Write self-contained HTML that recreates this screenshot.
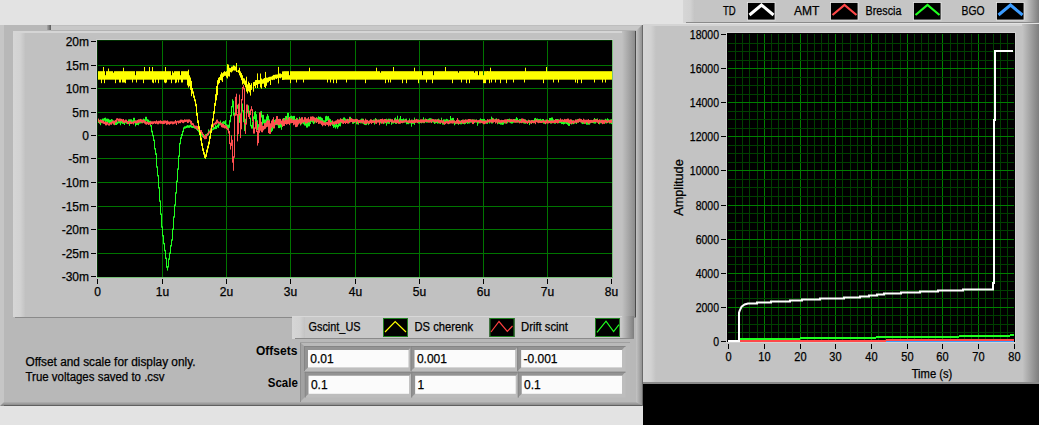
<!DOCTYPE html>
<html><head><meta charset="utf-8"><style>html,body{margin:0;padding:0;background:#e3e3e3;width:1039px;height:425px;overflow:hidden}svg{display:block;font-family:"Liberation Sans",sans-serif}</style></head>
<body><svg width="1039" height="425" viewBox="0 0 1039 425" font-family="Liberation Sans, sans-serif"><defs>
<linearGradient id="gR" x1="0" x2="1" y1="0" y2="0"><stop offset="0" stop-color="#c1c1c1"/><stop offset="1" stop-color="#8c8c8c"/></linearGradient>
<linearGradient id="gL" x1="0" x2="1" y1="0" y2="0"><stop offset="0" stop-color="#d6d6d6"/><stop offset="0.6" stop-color="#d2d2d2"/><stop offset="1" stop-color="#c3c3c3"/></linearGradient>
<linearGradient id="gB" x1="0" x2="0" y1="0" y2="1"><stop offset="0" stop-color="#b0b0b0"/><stop offset="1" stop-color="#808080"/></linearGradient>
<linearGradient id="gRL" x1="0" x2="1" y1="0" y2="0"><stop offset="0" stop-color="#c5c5c5"/><stop offset="1" stop-color="#7e7e7e"/></linearGradient>
<linearGradient id="gN" x1="0" x2="1" y1="0" y2="0"><stop offset="0" stop-color="#a8a8a8"/><stop offset="1" stop-color="#5a5a5a"/></linearGradient>
</defs>
<rect x="0" y="0" width="1039" height="425" fill="#e3e3e3" />
<rect x="0" y="25" width="643" height="381" fill="#b8b8b8" />
<rect x="0" y="25" width="4" height="381" fill="#c6c6c6" />
<rect x="51" y="25" width="591" height="6" fill="#c8c8c8" />
<rect x="51" y="25" width="591" height="1" fill="#bebebe" />
<rect x="51" y="30" width="585" height="1" fill="#b2b2b2" />
<rect x="47" y="25" width="4" height="5" fill="url(#gN)" />
<linearGradient id="gOR" x1="0" x2="1" y1="0" y2="0"><stop offset="0" stop-color="#c4c4c4"/><stop offset="1" stop-color="#8a8a8a"/></linearGradient>
<polygon points="636,31 642,25 643,25 643,406 636,406" fill="url(#gOR)"/>
<rect x="642" y="25" width="1" height="381" fill="#6a6a6a" />
<polygon points="0,406 4,402 636,402 643,406" fill="url(#gB)"/>
<rect x="4" y="405" width="638" height="1" fill="#606060" />
<rect x="13" y="31" width="623" height="286" fill="#c1c1c1" />
<rect x="13" y="31" width="12" height="286" fill="url(#gL)" />
<rect x="13" y="31" width="614" height="2" fill="#d5d5d5" />
<rect x="622" y="31" width="13" height="286" fill="url(#gR)" />
<rect x="635" y="31" width="1" height="286" fill="#4a4a4a" />
<rect x="15" y="317" width="621" height="1" fill="#8a8a8a" />
<rect x="96" y="39" width="517" height="239" fill="#cdcdcd" />
<rect x="97" y="40" width="515" height="237" fill="#000" />
<line x1="162.5" y1="40" x2="162.5" y2="277" stroke="#007400"/>
<line x1="226.5" y1="40" x2="226.5" y2="277" stroke="#007400"/>
<line x1="290.5" y1="40" x2="290.5" y2="277" stroke="#007400"/>
<line x1="355.5" y1="40" x2="355.5" y2="277" stroke="#007400"/>
<line x1="419.5" y1="40" x2="419.5" y2="277" stroke="#007400"/>
<line x1="483.5" y1="40" x2="483.5" y2="277" stroke="#007400"/>
<line x1="547.5" y1="40" x2="547.5" y2="277" stroke="#007400"/>
<line x1="97" y1="65.5" x2="612" y2="65.5" stroke="#007400"/>
<line x1="97" y1="88.5" x2="612" y2="88.5" stroke="#007400"/>
<line x1="97" y1="112.5" x2="612" y2="112.5" stroke="#007400"/>
<line x1="97" y1="135.5" x2="612" y2="135.5" stroke="#007400"/>
<line x1="97" y1="158.5" x2="612" y2="158.5" stroke="#007400"/>
<line x1="97" y1="182.5" x2="612" y2="182.5" stroke="#007400"/>
<line x1="97" y1="206.5" x2="612" y2="206.5" stroke="#007400"/>
<line x1="97" y1="229.5" x2="612" y2="229.5" stroke="#007400"/>
<line x1="97" y1="253.5" x2="612" y2="253.5" stroke="#007400"/>
<line x1="97.5" y1="40" x2="97.5" y2="277" stroke="#003000"/>
<line x1="97" y1="40.5" x2="612" y2="40.5" stroke="#003000"/>
<line x1="97" y1="277.5" x2="613" y2="277.5" stroke="#78c078"/>
<line x1="612.5" y1="40" x2="612.5" y2="278" stroke="#78c078"/>
<line x1="91" y1="41.5" x2="96" y2="41.5" stroke="#000"/>
<text x="89" y="45.5" font-size="12" text-anchor="end" font-weight="normal" fill="#000" stroke="#000" stroke-width="0.25" >20m</text>
<line x1="91" y1="65.5" x2="96" y2="65.5" stroke="#000"/>
<text x="89" y="69.5" font-size="12" text-anchor="end" font-weight="normal" fill="#000" stroke="#000" stroke-width="0.25" >15m</text>
<line x1="91" y1="88.5" x2="96" y2="88.5" stroke="#000"/>
<text x="89" y="92.5" font-size="12" text-anchor="end" font-weight="normal" fill="#000" stroke="#000" stroke-width="0.25" >10m</text>
<line x1="91" y1="112.5" x2="96" y2="112.5" stroke="#000"/>
<text x="89" y="116.5" font-size="12" text-anchor="end" font-weight="normal" fill="#000" stroke="#000" stroke-width="0.25" >5m</text>
<line x1="91" y1="135.5" x2="96" y2="135.5" stroke="#000"/>
<text x="89" y="139.5" font-size="12" text-anchor="end" font-weight="normal" fill="#000" stroke="#000" stroke-width="0.25" >0</text>
<line x1="91" y1="158.5" x2="96" y2="158.5" stroke="#000"/>
<text x="89" y="162.5" font-size="12" text-anchor="end" font-weight="normal" fill="#000" stroke="#000" stroke-width="0.25" >-5m</text>
<line x1="91" y1="182.5" x2="96" y2="182.5" stroke="#000"/>
<text x="89" y="186.5" font-size="12" text-anchor="end" font-weight="normal" fill="#000" stroke="#000" stroke-width="0.25" >-10m</text>
<line x1="91" y1="206.5" x2="96" y2="206.5" stroke="#000"/>
<text x="89" y="210.5" font-size="12" text-anchor="end" font-weight="normal" fill="#000" stroke="#000" stroke-width="0.25" >-15m</text>
<line x1="91" y1="229.5" x2="96" y2="229.5" stroke="#000"/>
<text x="89" y="233.5" font-size="12" text-anchor="end" font-weight="normal" fill="#000" stroke="#000" stroke-width="0.25" >-20m</text>
<line x1="91" y1="253.5" x2="96" y2="253.5" stroke="#000"/>
<text x="89" y="257.5" font-size="12" text-anchor="end" font-weight="normal" fill="#000" stroke="#000" stroke-width="0.25" >-25m</text>
<line x1="91" y1="276.5" x2="96" y2="276.5" stroke="#000"/>
<text x="89" y="280.5" font-size="12" text-anchor="end" font-weight="normal" fill="#000" stroke="#000" stroke-width="0.25" >-30m</text>
<line x1="97.5" y1="279" x2="97.5" y2="284" stroke="#000"/>
<text x="97.5" y="296" font-size="12" text-anchor="middle" font-weight="normal" fill="#000" stroke="#000" stroke-width="0.25" >0</text>
<line x1="162.5" y1="279" x2="162.5" y2="284" stroke="#000"/>
<text x="162.5" y="296" font-size="12" text-anchor="middle" font-weight="normal" fill="#000" stroke="#000" stroke-width="0.25" >1u</text>
<line x1="226.5" y1="279" x2="226.5" y2="284" stroke="#000"/>
<text x="226.5" y="296" font-size="12" text-anchor="middle" font-weight="normal" fill="#000" stroke="#000" stroke-width="0.25" >2u</text>
<line x1="290.5" y1="279" x2="290.5" y2="284" stroke="#000"/>
<text x="290.5" y="296" font-size="12" text-anchor="middle" font-weight="normal" fill="#000" stroke="#000" stroke-width="0.25" >3u</text>
<line x1="355.5" y1="279" x2="355.5" y2="284" stroke="#000"/>
<text x="355.5" y="296" font-size="12" text-anchor="middle" font-weight="normal" fill="#000" stroke="#000" stroke-width="0.25" >4u</text>
<line x1="419.5" y1="279" x2="419.5" y2="284" stroke="#000"/>
<text x="419.5" y="296" font-size="12" text-anchor="middle" font-weight="normal" fill="#000" stroke="#000" stroke-width="0.25" >5u</text>
<line x1="483.5" y1="279" x2="483.5" y2="284" stroke="#000"/>
<text x="483.5" y="296" font-size="12" text-anchor="middle" font-weight="normal" fill="#000" stroke="#000" stroke-width="0.25" >6u</text>
<line x1="547.5" y1="279" x2="547.5" y2="284" stroke="#000"/>
<text x="547.5" y="296" font-size="12" text-anchor="middle" font-weight="normal" fill="#000" stroke="#000" stroke-width="0.25" >7u</text>
<line x1="611.5" y1="279" x2="611.5" y2="284" stroke="#000"/>
<text x="611.5" y="296" font-size="12" text-anchor="middle" font-weight="normal" fill="#000" stroke="#000" stroke-width="0.25" >8u</text>
<path d="M98.5 121.0V123.0M99.5 119.8V123.6M100.5 119.5V125.2M101.5 119.5V123.2M102.5 118.6V122.4M103.5 118.5V121.6M104.5 117.9V120.8M105.5 117.6V122.4M106.5 118.7V121.8M107.5 118.6V122.1M108.5 118.8V122.8M109.5 119.6V123.3M110.5 119.8V123.9M111.5 119.0V123.9M112.5 119.5V123.2M113.5 120.5V124.7M114.5 121.2V124.7M115.5 121.2V125.0M116.5 121.8V125.0M117.5 121.4V124.2M118.5 121.1V123.3M119.5 119.3V123.3M120.5 119.5V125.2M121.5 119.6V123.3M122.5 120.9V123.9M123.5 120.3V123.9M124.5 121.1V125.0M125.5 121.1V123.2M126.5 121.1V123.8M127.5 121.3V124.0M128.5 119.4V123.9M129.5 119.3V125.8M130.5 119.3V124.0M131.5 119.3V122.9M132.5 120.3V122.4M133.5 117.8V123.3M134.5 117.8V123.2M135.5 120.4V126.4M136.5 120.6V125.0M137.5 121.6V124.9M138.5 121.4V125.3M139.5 119.3V123.7M140.5 120.0V123.4M141.5 119.8V123.3M142.5 119.9V122.9M143.5 118.6V122.8M144.5 119.2V121.5M145.5 116.8V122.4M146.5 116.8V120.9M147.5 119.2V123.8M148.5 119.7V123.3M149.5 120.8V123.3M150.5 120.8V126.5M151.5 125.1V132.4M152.5 130.7V136.3M153.5 134.9V141.0M154.5 139.6V149.5M155.5 148.1V154.9M156.5 153.2V167.7M157.5 166.3V176.4M158.5 175.0V188.5M159.5 187.1V201.8M160.5 200.4V214.9M161.5 213.5V227.7M162.5 226.3V236.5M163.5 235.1V244.3M164.5 242.9V251.3M165.5 249.9V259.0M166.5 257.6V267.8M167.5 266.1V270.6M168.5 258.4V267.5M169.5 252.5V259.8M170.5 245.1V253.9M171.5 239.3V246.5M172.5 228.5V240.7M173.5 216.3V229.9M174.5 204.4V217.7M175.5 192.2V205.8M176.5 180.6V193.6M177.5 168.4V182.0M178.5 155.5V169.8M179.5 142.9V156.9M180.5 137.3V144.3M181.5 134.0V138.8M182.5 130.8V135.9M183.5 127.4V132.2M184.5 126.4V128.8M185.5 126.3V128.5M186.5 125.7V128.0M187.5 125.1V127.7M188.5 125.4V127.8M189.5 125.2V127.8M190.5 124.5V127.2M191.5 125.3V127.8M192.5 125.9V128.0M193.5 125.6V128.0M194.5 126.3V128.6M195.5 126.9V128.8M196.5 126.9V129.9M197.5 128.3V131.0M198.5 129.5V132.3M199.5 130.6V133.6M200.5 131.9V134.8M201.5 133.4V136.5M202.5 135.1V137.2M203.5 135.6V137.6M204.5 134.9V138.0M205.5 134.2V137.1M206.5 133.9V135.8M207.5 132.8V135.6M208.5 129.4V134.2M209.5 130.6V133.5M210.5 129.5V132.0M211.5 128.5V131.3M212.5 128.5V130.5M213.5 127.1V129.9M214.5 127.0V129.3M215.5 124.6V129.1M216.5 125.9V129.0M217.5 124.7V127.4M218.5 122.7V127.9M219.5 122.4V125.6M220.5 120.5V124.9M221.5 122.6V126.2M222.5 121.8V124.6M223.5 121.1V123.8M224.5 121.3V124.1M225.5 120.2V125.5M226.5 124.1V127.2M227.5 124.7V129.1M228.5 124.7V129.1M229.5 120.2V127.8M230.5 115.0V122.3M231.5 106.0V116.4M232.5 99.2V107.4M233.5 100.8V115.7M234.5 112.8V117.8M235.5 107.3V114.2M236.5 105.9V111.7M237.5 104.8V108.8M238.5 106.5V116.1M239.5 114.7V122.8M240.5 113.2V122.8M241.5 105.6V115.5M242.5 103.5V111.6M243.5 110.2V122.2M244.5 120.8V131.1M245.5 118.8V126.9M246.5 111.8V120.2M247.5 105.5V113.3M248.5 105.4V114.5M249.5 110.7V119.0M250.5 117.6V126.3M251.5 124.9V128.6M252.5 121.7V128.6M253.5 116.4V123.1M254.5 111.9V119.1M255.5 111.1V122.6M256.5 114.2V123.6M257.5 120.3V130.0M258.5 124.1V129.8M259.5 118.6V129.8M260.5 111.4V123.3M261.5 111.1V117.5M262.5 114.8V124.8M263.5 114.8V123.4M264.5 119.4V126.6M265.5 119.5V123.6M266.5 116.5V122.5M267.5 114.1V122.8M268.5 115.8V120.8M269.5 119.4V125.4M270.5 124.0V127.7M271.5 126.3V132.1M272.5 125.8V130.8M273.5 121.6V128.3M274.5 120.0V123.5M275.5 119.2V125.2M276.5 121.5V125.0M277.5 121.3V125.3M278.5 120.6V128.1M279.5 123.2V128.1M280.5 121.2V127.5M281.5 121.2V129.8M282.5 118.9V124.4M283.5 118.0V124.3M284.5 118.1V123.5M285.5 116.1V122.6M286.5 115.9V123.5M287.5 112.9V123.2M288.5 112.9V120.4M289.5 116.8V119.6M290.5 116.1V122.1M291.5 115.6V122.1M292.5 116.2V121.2M293.5 115.9V123.7M294.5 115.9V123.4M295.5 119.0V122.6M296.5 118.6V123.2M297.5 118.1V124.4M298.5 121.4V124.4M299.5 116.9V123.4M300.5 118.5V125.5M301.5 120.2V124.4M302.5 120.2V123.5M303.5 120.4V124.3M304.5 120.7V125.5M305.5 121.1V125.7M306.5 121.8V127.6M307.5 121.4V127.6M308.5 121.4V126.4M309.5 120.6V126.3M310.5 117.6V124.0M311.5 119.2V121.9M312.5 117.1V122.6M313.5 118.2V124.1M314.5 120.0V123.5M315.5 117.9V122.5M316.5 117.6V123.0M317.5 117.7V120.8M318.5 116.3V122.0M319.5 116.9V120.4M320.5 116.7V121.9M321.5 117.6V122.1M322.5 118.2V122.0M323.5 120.2V123.4M324.5 120.4V123.4M325.5 116.3V123.2M326.5 115.8V121.4M327.5 116.4V120.7M328.5 116.1V120.4M329.5 118.4V121.6M330.5 119.1V122.8M331.5 120.7V124.1M332.5 122.2V125.9M333.5 123.3V127.9M334.5 123.1V127.3M335.5 124.2V128.6M336.5 123.6V127.2M337.5 124.7V128.8M338.5 122.1V127.2M339.5 122.1V126.1M340.5 121.4V126.4M341.5 118.9V123.2M342.5 118.8V121.7M343.5 117.5V120.8M344.5 117.4V120.9M345.5 118.6V122.7M346.5 119.6V122.7M347.5 119.6V122.9M348.5 119.0V123.2M349.5 116.8V123.2M350.5 116.8V121.8M351.5 119.1V121.7M352.5 119.6V123.8M353.5 119.4V123.8M354.5 120.5V123.0M355.5 119.8V122.5M356.5 120.7V124.3M357.5 119.8V124.3M358.5 120.3V124.7M359.5 120.2V122.2M360.5 119.4V123.4M361.5 118.6V123.4M362.5 118.6V122.9M363.5 118.8V124.2M364.5 120.6V124.9M365.5 120.6V125.1M366.5 119.8V125.1M367.5 120.8V123.8M368.5 121.1V125.1M369.5 120.7V123.8M370.5 119.5V122.8M371.5 120.3V122.8M372.5 120.0V122.9M373.5 119.5V122.9M374.5 119.4V124.6M375.5 118.0V122.6M376.5 118.9V121.8M377.5 119.6V122.1M378.5 119.7V122.5M379.5 119.7V123.2M380.5 120.3V123.4M381.5 120.2V123.4M382.5 119.0V122.8M383.5 121.0V124.1M384.5 120.5V123.5M385.5 119.3V122.5M386.5 118.7V125.7M387.5 119.5V123.6M388.5 118.7V123.8M389.5 118.8V123.8M390.5 118.8V121.8M391.5 119.7V124.8M392.5 119.5V123.6M393.5 120.7V123.6M394.5 118.3V123.0M395.5 117.5V123.9M396.5 119.2V123.9M397.5 115.7V121.6M398.5 120.2V122.7M399.5 118.5V123.2M400.5 116.0V123.2M401.5 119.1V122.2M402.5 119.1V123.3M403.5 118.4V121.8M404.5 119.3V122.7M405.5 118.8V122.5M406.5 118.6V124.3M407.5 120.6V124.1M408.5 121.4V124.2M409.5 118.5V123.4M410.5 121.0V123.3M411.5 121.5V126.7M412.5 119.7V123.9M413.5 119.9V123.8M414.5 117.6V124.9M415.5 120.2V122.5M416.5 119.6V121.9M417.5 119.6V122.5M418.5 119.4V123.5M419.5 120.7V123.5M420.5 120.2V123.0M421.5 119.9V123.4M422.5 119.6V122.6M423.5 117.3V123.2M424.5 120.0V123.2M425.5 118.5V122.3M426.5 119.2V122.7M427.5 119.2V122.7M428.5 118.8V121.7M429.5 118.2V122.5M430.5 118.2V122.6M431.5 118.5V122.3M432.5 119.6V122.3M433.5 119.9V122.7M434.5 119.6V124.0M435.5 119.4V123.4M436.5 119.5V123.0M437.5 119.8V123.7M438.5 118.6V123.4M439.5 119.5V123.6M440.5 120.3V124.0M441.5 117.7V122.5M442.5 120.4V124.6M443.5 119.4V124.6M444.5 119.4V122.9M445.5 119.5V122.8M446.5 118.8V122.0M447.5 119.2V122.3M448.5 119.8V123.6M449.5 120.5V123.9M450.5 116.0V123.1M451.5 118.4V123.1M452.5 117.9V123.4M453.5 117.9V122.6M454.5 120.5V125.3M455.5 121.1V124.2M456.5 120.5V123.6M457.5 119.7V123.9M458.5 120.5V124.9M459.5 120.2V123.7M460.5 120.5V124.3M461.5 121.0V124.3M462.5 120.5V123.6M463.5 119.5V124.0M464.5 120.3V124.4M465.5 120.0V123.9M466.5 119.8V123.1M467.5 119.8V123.9M468.5 119.3V123.5M469.5 120.0V123.5M470.5 119.3V122.8M471.5 120.5V122.6M472.5 119.3V123.0M473.5 119.7V123.4M474.5 119.4V123.0M475.5 120.6V122.3M476.5 119.5V122.4M477.5 121.0V125.8M478.5 120.7V123.5M479.5 119.6V122.9M480.5 118.4V123.4M481.5 119.1V123.0M482.5 119.1V123.1M483.5 118.9V122.7M484.5 118.9V122.6M485.5 120.3V123.0M486.5 120.3V123.8M487.5 119.8V123.9M488.5 120.1V121.9M489.5 119.5V123.5M490.5 119.5V122.4M491.5 116.6V123.5M492.5 117.8V123.5M493.5 118.5V121.8M494.5 119.2V122.0M495.5 118.8V122.2M496.5 118.3V122.5M497.5 121.1V124.3M498.5 119.8V123.7M499.5 119.8V124.0M500.5 122.0V124.6M501.5 120.3V124.6M502.5 121.8V124.9M503.5 121.0V124.6M504.5 120.4V123.0M505.5 120.0V123.7M506.5 120.3V123.3M507.5 119.0V123.3M508.5 119.0V121.9M509.5 118.6V122.6M510.5 119.7V123.2M511.5 120.0V123.6M512.5 119.6V123.5M513.5 119.0V122.8M514.5 119.0V122.2M515.5 118.8V122.1M516.5 117.1V122.6M517.5 118.2V122.7M518.5 119.9V122.4M519.5 119.0V123.2M520.5 119.0V122.8M521.5 120.5V122.8M522.5 120.1V122.8M523.5 120.1V123.4M524.5 119.1V123.7M525.5 120.2V123.7M526.5 120.2V123.2M527.5 120.6V123.2M528.5 119.8V123.0M529.5 120.0V125.1M530.5 120.7V122.4M531.5 120.0V124.0M532.5 120.0V123.0M533.5 120.0V122.9M534.5 118.3V123.2M535.5 117.9V122.2M536.5 118.7V121.8M537.5 118.5V121.6M538.5 119.1V121.8M539.5 119.1V122.8M540.5 118.8V122.1M541.5 119.6V122.0M542.5 119.0V122.4M543.5 119.0V123.7M544.5 120.5V123.8M545.5 119.7V123.5M546.5 121.0V122.9M547.5 119.5V123.3M548.5 120.1V123.0M549.5 118.0V122.5M550.5 118.0V123.6M551.5 117.5V123.6M552.5 117.5V122.2M553.5 119.4V122.8M554.5 120.0V123.7M555.5 119.6V123.7M556.5 119.0V122.9M557.5 119.0V123.2M558.5 119.4V123.1M559.5 119.8V123.1M560.5 119.5V123.1M561.5 120.7V124.1M562.5 121.5V124.0M563.5 120.1V124.5M564.5 120.4V124.0M565.5 120.4V123.6M566.5 121.5V124.0M567.5 120.9V124.8M568.5 120.9V125.9M569.5 120.0V125.9M570.5 119.9V123.3M571.5 119.9V124.5M572.5 120.1V124.1M573.5 121.0V124.1M574.5 120.9V123.6M575.5 120.3V123.3M576.5 119.7V124.0M577.5 119.1V122.6M578.5 119.7V122.3M579.5 118.9V122.0M580.5 119.3V122.1M581.5 120.2V123.4M582.5 120.1V124.1M583.5 120.3V123.9M584.5 120.7V123.5M585.5 120.9V123.5M586.5 121.8V124.7M587.5 120.9V124.7M588.5 121.1V124.7M589.5 121.2V124.7M590.5 120.1V123.4M591.5 120.0V122.9M592.5 120.0V123.0M593.5 120.2V123.3M594.5 118.0V123.6M595.5 118.9V123.6M596.5 118.9V122.4M597.5 118.5V122.5M598.5 120.6V122.8M599.5 120.3V124.3M600.5 119.6V123.3M601.5 119.6V123.4M602.5 120.4V123.2M603.5 119.8V123.1M604.5 119.7V123.1M605.5 118.8V123.3M606.5 119.4V123.5M607.5 118.3V123.0M608.5 119.2V122.6M609.5 119.7V123.6M610.5 119.6V123.5M611.5 119.2V124.1" stroke="#20ff20" stroke-width="1" fill="none"/>
<path d="M98.5 118.6V121.9M99.5 120.5V123.5M100.5 119.6V122.5M101.5 120.0V122.9M102.5 120.3V123.3M103.5 120.7V123.8M104.5 121.5V124.1M105.5 121.6V125.4M106.5 121.9V125.4M107.5 121.9V124.7M108.5 123.3V125.5M109.5 123.1V125.6M110.5 122.2V124.6M111.5 121.7V124.8M112.5 120.7V123.5M113.5 120.7V124.2M114.5 120.6V125.2M115.5 119.9V122.5M116.5 118.4V122.5M117.5 118.2V120.6M118.5 118.7V121.5M119.5 118.5V121.5M120.5 118.6V121.7M121.5 118.9V121.1M122.5 119.3V122.3M123.5 119.0V122.9M124.5 120.3V122.9M125.5 119.6V122.5M126.5 119.7V122.4M127.5 120.9V124.1M128.5 121.3V124.1M129.5 120.7V123.4M130.5 120.7V123.9M131.5 121.7V124.0M132.5 121.9V123.7M133.5 121.2V124.5M134.5 120.7V123.2M135.5 120.6V122.9M136.5 120.5V123.6M137.5 119.9V123.2M138.5 119.3V122.8M139.5 119.6V122.5M140.5 118.9V122.2M141.5 119.3V122.5M142.5 119.5V123.3M143.5 120.0V122.4M144.5 120.2V123.6M145.5 121.3V124.4M146.5 121.5V124.8M147.5 121.6V124.2M148.5 122.3V125.0M149.5 122.1V124.6M150.5 121.5V125.0M151.5 121.3V124.1M152.5 121.3V124.4M153.5 121.3V124.0M154.5 121.1V123.4M155.5 121.2V124.0M156.5 120.3V123.7M157.5 121.2V124.3M158.5 120.8V124.3M159.5 120.8V123.5M160.5 120.3V123.8M161.5 120.9V123.8M162.5 121.1V124.1M163.5 120.5V124.1M164.5 120.5V123.9M165.5 120.5V123.3M166.5 120.8V124.8M167.5 120.4V124.5M168.5 121.4V124.2M169.5 121.6V124.8M170.5 121.3V124.1M171.5 121.3V123.7M172.5 121.4V124.4M173.5 121.5V124.2M174.5 121.3V123.8M175.5 120.0V123.5M176.5 121.1V125.0M177.5 120.7V122.6M178.5 120.7V123.7M179.5 120.4V123.1M180.5 119.6V123.2M181.5 119.6V122.2M182.5 119.8V122.9M183.5 120.1V123.2M184.5 119.3V122.3M185.5 119.6V122.0M186.5 119.5V121.8M187.5 119.5V123.0M188.5 119.4V122.8M189.5 119.4V121.8M190.5 120.2V123.8M191.5 120.9V125.2M192.5 122.9V125.2M193.5 123.4V126.7M194.5 125.3V127.7M195.5 125.7V128.6M196.5 125.7V128.9M197.5 126.0V130.1M198.5 127.5V130.3M199.5 128.7V131.9M200.5 130.1V132.7M201.5 130.1V133.7M202.5 132.2V135.3M203.5 133.9V137.9M204.5 135.1V139.2M205.5 136.1V139.2M206.5 134.4V138.9M207.5 133.5V136.1M208.5 131.7V135.0M209.5 130.8V133.1M210.5 128.4V132.8M211.5 126.2V129.8M212.5 124.8V127.6M213.5 123.5V127.6M214.5 122.8V125.2M215.5 121.7V124.4M216.5 119.7V124.4M217.5 119.5V123.4M218.5 121.3V123.4M219.5 121.8V124.3M220.5 122.1V125.4M221.5 123.0V127.2M222.5 123.8V127.6M223.5 123.6V127.8M224.5 124.9V128.4M225.5 125.3V128.4M226.5 125.8V129.0M227.5 127.6V130.3M228.5 128.7V133.5M229.5 130.9V144.1M230.5 142.7V149.6M231.5 135.4V145.9M232.5 139.8V162.7M233.5 156.3V170.8M234.5 114.4V157.7M235.5 96.8V115.8M236.5 93.7V115.5M237.5 114.1V141.4M238.5 103.7V134.2M239.5 94.6V115.3M240.5 113.9V138.1M241.5 99.0V129.3M242.5 87.0V100.4M243.5 85.0V89.3M244.5 87.9V124.4M245.5 123.0V133.9M246.5 104.5V124.6M247.5 104.5V111.5M248.5 110.1V117.0M249.5 113.6V119.0M250.5 109.3V115.0M251.5 106.2V110.7M252.5 109.1V121.4M253.5 120.0V133.6M254.5 127.4V133.6M255.5 121.8V128.8M256.5 120.8V132.0M257.5 130.6V145.6M258.5 127.2V143.1M259.5 112.4V132.9M260.5 112.4V130.7M261.5 121.8V132.2M262.5 125.4V132.3M263.5 125.9V130.4M264.5 123.0V129.3M265.5 123.0V128.7M266.5 121.3V127.3M267.5 120.1V126.8M268.5 120.5V133.1M269.5 120.5V133.9M270.5 123.3V133.9M271.5 120.6V128.2M272.5 119.2V127.1M273.5 117.2V128.4M274.5 122.3V128.4M275.5 120.4V124.7M276.5 116.1V124.4M277.5 116.1V124.5M278.5 119.0V125.1M279.5 118.8V125.1M280.5 118.9V123.8M281.5 120.6V124.9M282.5 118.8V126.9M283.5 118.8V126.0M284.5 120.5V125.9M285.5 119.3V124.0M286.5 117.0V124.7M287.5 120.0V124.2M288.5 118.0V123.9M289.5 117.0V125.1M290.5 118.9V123.4M291.5 118.1V123.2M292.5 120.1V123.0M293.5 119.2V125.2M294.5 119.9V124.6M295.5 119.9V127.1M296.5 117.7V127.1M297.5 120.1V126.6M298.5 119.4V124.4M299.5 118.8V123.3M300.5 118.8V124.7M301.5 117.2V123.7M302.5 117.2V122.7M303.5 119.5V122.7M304.5 117.2V121.9M305.5 117.2V123.9M306.5 118.6V123.1M307.5 118.4V123.2M308.5 117.1V122.2M309.5 119.2V122.6M310.5 116.6V121.3M311.5 116.6V120.7M312.5 116.3V121.5M313.5 116.6V120.7M314.5 117.3V122.7M315.5 118.2V121.5M316.5 117.3V123.0M317.5 119.0V122.2M318.5 119.0V124.0M319.5 120.1V123.7M320.5 120.4V123.7M321.5 120.6V124.9M322.5 120.8V126.3M323.5 121.8V125.3M324.5 122.2V125.3M325.5 122.5V126.0M326.5 122.0V124.7M327.5 121.8V125.0M328.5 119.9V126.5M329.5 119.9V125.5M330.5 122.1V126.1M331.5 122.3V124.7M332.5 120.3V124.6M333.5 121.5V124.2M334.5 121.3V125.0M335.5 120.7V124.0M336.5 120.3V124.0M337.5 119.2V123.8M338.5 119.5V123.8M339.5 119.5V123.2M340.5 118.3V122.4M341.5 119.3V122.5M342.5 119.3V123.6M343.5 119.6V124.0M344.5 120.7V123.0M345.5 120.4V124.0M346.5 119.3V123.0M347.5 118.8V123.6M348.5 120.5V123.6M349.5 117.4V122.3M350.5 118.8V122.3M351.5 118.2V122.0M352.5 118.8V122.5M353.5 119.3V122.5M354.5 119.2V122.1M355.5 119.0V121.9M356.5 118.8V123.8M357.5 119.2V121.6M358.5 119.9V123.4M359.5 119.9V123.0M360.5 120.0V122.6M361.5 119.8V122.6M362.5 119.5V123.5M363.5 119.3V122.5M364.5 120.5V124.1M365.5 118.7V124.1M366.5 119.9V124.0M367.5 119.9V122.9M368.5 120.8V123.8M369.5 120.4V123.8M370.5 119.4V123.1M371.5 119.4V124.1M372.5 120.3V123.0M373.5 120.4V122.7M374.5 120.7V122.6M375.5 119.2V123.7M376.5 119.2V123.9M377.5 120.4V122.6M378.5 119.7V122.4M379.5 119.7V125.2M380.5 119.0V122.2M381.5 119.0V123.6M382.5 118.6V123.5M383.5 119.4V123.5M384.5 119.0V122.1M385.5 119.0V123.2M386.5 119.9V122.9M387.5 119.6V122.2M388.5 119.4V122.0M389.5 120.1V122.8M390.5 119.2V121.8M391.5 119.3V122.5M392.5 119.3V122.7M393.5 120.5V122.8M394.5 118.9V122.5M395.5 120.1V122.9M396.5 119.7V123.2M397.5 119.4V123.2M398.5 119.4V123.8M399.5 121.6V123.8M400.5 120.1V123.6M401.5 120.5V123.0M402.5 120.6V123.0M403.5 120.3V122.9M404.5 120.2V122.4M405.5 119.7V122.3M406.5 119.8V122.4M407.5 120.7V122.5M408.5 120.2V123.0M409.5 120.2V123.0M410.5 120.2V123.2M411.5 119.6V122.8M412.5 120.5V123.0M413.5 120.1V123.2M414.5 119.4V123.1M415.5 119.4V122.9M416.5 118.9V122.7M417.5 119.5V123.1M418.5 119.9V122.3M419.5 120.0V122.2M420.5 119.3V122.8M421.5 119.3V122.7M422.5 119.4V122.7M423.5 120.0V122.6M424.5 119.3V122.9M425.5 119.3V121.9M426.5 119.0V121.9M427.5 120.1V122.0M428.5 119.9V122.7M429.5 119.7V122.5M430.5 119.3V121.9M431.5 119.3V123.1M432.5 118.9V121.6M433.5 119.1V121.5M434.5 119.5V122.5M435.5 119.4V122.4M436.5 119.7V122.1M437.5 119.2V121.7M438.5 119.6V122.9M439.5 120.1V122.9M440.5 120.1V123.1M441.5 119.4V122.7M442.5 120.5V123.3M443.5 120.2V123.7M444.5 121.7V124.8M445.5 121.2V124.1M446.5 120.8V123.3M447.5 120.6V123.8M448.5 121.2V124.2M449.5 119.9V123.3M450.5 120.4V123.4M451.5 120.6V123.4M452.5 119.8V123.5M453.5 120.6V123.5M454.5 120.4V122.7M455.5 121.2V123.7M456.5 119.9V123.7M457.5 118.0V123.5M458.5 119.7V124.0M459.5 121.0V123.9M460.5 121.1V123.3M461.5 120.0V122.5M462.5 119.6V123.6M463.5 120.3V123.6M464.5 119.8V123.2M465.5 119.3V123.2M466.5 119.7V122.6M467.5 119.6V122.0M468.5 119.0V123.0M469.5 119.0V122.1M470.5 119.3V122.1M471.5 119.4V122.3M472.5 119.6V124.1M473.5 119.5V124.1M474.5 120.0V122.2M475.5 119.7V122.3M476.5 119.7V122.5M477.5 120.2V122.2M478.5 120.1V122.2M479.5 119.9V123.3M480.5 120.0V122.8M481.5 120.4V122.9M482.5 120.7V123.4M483.5 120.5V124.2M484.5 120.9V124.2M485.5 120.5V123.7M486.5 120.7V122.9M487.5 119.1V122.6M488.5 119.6V122.6M489.5 119.4V121.8M490.5 119.4V122.4M491.5 119.6V122.4M492.5 118.6V122.8M493.5 118.6V122.7M494.5 119.6V122.0M495.5 119.3V123.6M496.5 119.2V122.5M497.5 119.2V123.8M498.5 118.9V122.4M499.5 119.7V122.9M500.5 120.1V122.9M501.5 119.8V122.9M502.5 120.0V122.5M503.5 120.0V122.2M504.5 119.5V123.4M505.5 119.3V122.8M506.5 119.3V123.7M507.5 119.4V121.5M508.5 119.8V122.3M509.5 119.7V122.2M510.5 119.1V122.1M511.5 119.1V121.9M512.5 119.5V121.8M513.5 119.2V122.1M514.5 119.3V122.7M515.5 120.4V122.8M516.5 120.2V122.5M517.5 120.2V122.4M518.5 120.0V122.5M519.5 120.8V123.3M520.5 120.8V122.8M521.5 118.5V123.2M522.5 118.5V122.6M523.5 118.8V122.6M524.5 119.8V122.7M525.5 119.4V123.1M526.5 120.8V123.2M527.5 120.8V124.0M528.5 119.8V122.8M529.5 120.5V122.7M530.5 120.5V123.5M531.5 120.2V123.4M532.5 120.2V123.0M533.5 120.8V123.3M534.5 120.3V122.9M535.5 120.2V124.2M536.5 119.0V122.2M537.5 120.4V122.7M538.5 120.2V123.2M539.5 120.1V122.8M540.5 120.8V123.0M541.5 120.4V123.0M542.5 120.7V122.8M543.5 119.8V122.5M544.5 120.4V122.9M545.5 121.0V124.2M546.5 119.5V123.4M547.5 119.8V123.5M548.5 120.4V123.4M549.5 120.9V123.0M550.5 120.8V123.2M551.5 120.3V123.2M552.5 120.5V123.2M553.5 120.6V123.2M554.5 119.9V123.0M555.5 119.1V122.9M556.5 119.9V122.9M557.5 119.9V123.4M558.5 119.6V123.2M559.5 119.7V121.5M560.5 118.4V122.0M561.5 119.5V122.0M562.5 119.3V121.8M563.5 119.8V122.1M564.5 118.9V122.2M565.5 119.2V122.2M566.5 119.1V122.6M567.5 118.6V122.3M568.5 118.6V123.1M569.5 119.7V123.5M570.5 119.3V123.9M571.5 119.5V123.9M572.5 120.9V123.0M573.5 120.2V124.1M574.5 120.5V123.2M575.5 119.4V122.5M576.5 119.7V123.1M577.5 119.7V122.6M578.5 118.9V122.7M579.5 118.5V121.6M580.5 118.8V122.4M581.5 119.1V122.4M582.5 120.0V122.6M583.5 118.7V122.6M584.5 119.5V123.8M585.5 119.8V123.6M586.5 119.7V122.3M587.5 119.7V122.8M588.5 119.1V123.9M589.5 120.0V123.4M590.5 119.9V123.0M591.5 119.9V122.7M592.5 120.3V122.6M593.5 119.4V122.5M594.5 119.4V122.0M595.5 119.4V122.3M596.5 119.3V122.3M597.5 119.3V122.7M598.5 120.0V124.0M599.5 119.3V122.5M600.5 120.4V122.7M601.5 119.9V123.0M602.5 119.7V124.2M603.5 120.0V123.8M604.5 120.2V123.9M605.5 119.7V122.3M606.5 120.1V122.9M607.5 120.7V123.1M608.5 120.3V122.3M609.5 120.1V122.9M610.5 119.7V123.0M611.5 119.9V122.9" stroke="#ff5050" stroke-width="1" fill="none"/>
<path d="M98.5 71.2V79.7M99.5 71.2V79.7M100.5 71.2V79.7M101.5 71.2V83.2M102.5 71.2V79.7M103.5 67.0V79.7M104.5 71.2V83.2M105.5 75.2V79.7M106.5 71.2V79.7M107.5 71.2V79.7M108.5 68.5V79.7M109.5 71.2V79.7M110.5 71.2V79.7M111.5 71.2V79.7M112.5 71.2V79.7M113.5 72.7V79.7M114.5 71.2V79.7M115.5 71.2V83.2M116.5 71.2V79.7M117.5 71.2V79.7M118.5 71.2V79.7M119.5 71.2V82.5M120.5 71.2V82.5M121.5 71.2V79.7M122.5 71.2V82.5M123.5 67.7V82.5M124.5 71.2V82.5M125.5 71.2V83.2M126.5 71.2V79.7M127.5 71.2V79.7M128.5 71.2V79.7M129.5 71.2V79.7M130.5 71.2V79.7M131.5 71.2V79.7M132.5 71.2V82.5M133.5 71.2V79.7M134.5 71.2V79.7M135.5 75.2V79.7M136.5 71.2V82.5M137.5 71.2V79.7M138.5 71.2V79.7M139.5 71.2V79.7M140.5 71.2V79.7M141.5 71.2V79.7M142.5 71.2V79.7M143.5 71.2V83.2M144.5 67.0V79.7M145.5 71.2V79.7M146.5 71.2V79.7M147.5 71.2V79.7M148.5 71.2V79.7M149.5 67.0V79.7M150.5 71.2V79.7M151.5 71.2V79.7M152.5 67.0V82.5M153.5 71.2V83.2M154.5 71.2V79.7M155.5 71.2V82.5M156.5 71.2V79.7M157.5 71.2V79.7M158.5 71.2V83.2M159.5 71.2V79.7M160.5 71.2V79.7M161.5 71.2V79.7M162.5 71.2V79.7M163.5 71.2V79.7M164.5 71.2V82.5M165.5 67.0V83.2M166.5 71.2V82.5M167.5 71.2V79.7M168.5 71.2V79.7M169.5 71.2V79.7M170.5 71.2V79.7M171.5 75.2V83.2M172.5 71.2V79.7M173.5 72.7V79.7M174.5 71.2V79.7M175.5 71.2V83.2M176.5 71.2V82.5M177.5 71.2V79.7M178.5 71.2V82.5M179.5 71.2V79.7M180.5 75.2V79.7M181.5 71.2V82.5M182.5 71.2V82.5M183.5 71.2V79.7M184.5 71.2V79.7M185.5 71.2V79.7M186.5 71.2V79.7M187.5 71.2V85.4M188.5 69.7V87.5M189.5 75.3V86.2M190.5 77.5V89.8M191.5 80.9V96.2M192.5 88.0V93.7M193.5 91.4V97.8M194.5 95.6V101.3M195.5 99.3V106.3M196.5 103.8V115.8M197.5 112.9V123.1M198.5 120.3V128.9M199.5 126.2V135.1M200.5 132.0V140.6M201.5 137.5V145.9M202.5 143.2V150.9M203.5 148.3V154.6M204.5 152.2V157.9M205.5 154.3V158.8M206.5 149.6V156.9M207.5 145.7V152.6M208.5 141.6V148.4M209.5 136.1V144.4M210.5 130.5V138.8M211.5 124.4V132.9M212.5 118.4V127.0M213.5 111.2V120.8M214.5 102.9V113.8M215.5 94.2V105.9M216.5 86.0V100.4M217.5 80.2V95.2M218.5 77.8V84.5M219.5 77.0V83.1M220.5 74.4V80.0M221.5 72.3V80.5M222.5 73.2V82.0M223.5 72.2V76.9M224.5 71.2V75.9M225.5 71.8V75.8M226.5 71.2V77.5M227.5 64.2V78.5M228.5 64.6V76.3M229.5 67.8V76.6M230.5 68.1V72.1M231.5 66.7V72.5M232.5 66.5V71.4M233.5 65.3V70.4M234.5 65.8V70.6M235.5 66.5V70.6M236.5 63.0V72.0M237.5 70.7V71.8M238.5 69.9V72.8M239.5 67.7V75.4M240.5 71.4V77.6M241.5 73.1V80.3M242.5 75.2V84.5M243.5 78.2V83.6M244.5 78.5V84.8M245.5 80.5V87.4M246.5 76.7V91.6M247.5 84.3V93.5M248.5 81.6V91.2M249.5 83.0V92.4M250.5 84.9V95.6M251.5 83.2V89.9M252.5 87.4V87.6M253.5 82.1V91.7M254.5 81.8V86.1M255.5 80.1V88.0M256.5 80.0V85.0M257.5 73.4V88.0M258.5 80.1V84.1M259.5 80.1V83.8M260.5 73.5V87.5M261.5 78.5V88.7M262.5 79.4V83.8M263.5 78.7V83.6M264.5 78.0V87.0M265.5 71.9V88.0M266.5 77.6V85.8M267.5 77.7V82.6M268.5 77.2V82.3M269.5 76.8V81.0M270.5 76.7V85.0M271.5 76.5V79.8M272.5 75.8V80.1M273.5 74.9V79.7M274.5 74.9V79.8M275.5 74.6V78.6M276.5 74.5V79.1M277.5 74.4V78.2M278.5 66.9V83.5M279.5 73.5V77.9M280.5 73.5V78.3M281.5 74.1V77.5M282.5 71.4V80.0M283.5 71.3V79.9M284.5 71.2V79.8M285.5 71.2V79.7M286.5 71.2V79.7M287.5 71.2V79.7M288.5 71.2V79.7M289.5 75.2V79.7M290.5 71.2V83.2M291.5 71.2V79.7M292.5 71.2V79.7M293.5 71.2V79.7M294.5 71.2V79.7M295.5 71.2V79.7M296.5 71.2V82.5M297.5 71.2V79.7M298.5 71.2V79.7M299.5 71.2V79.7M300.5 71.2V79.7M301.5 71.2V79.7M302.5 71.2V79.7M303.5 71.2V82.5M304.5 71.2V79.7M305.5 71.2V79.7M306.5 71.2V79.7M307.5 71.2V79.7M308.5 71.2V79.7M309.5 67.7V79.7M310.5 71.2V79.7M311.5 71.2V79.7M312.5 71.2V79.7M313.5 71.2V79.7M314.5 71.2V79.7M315.5 71.2V79.7M316.5 71.2V79.7M317.5 71.2V79.7M318.5 71.2V79.7M319.5 71.2V79.7M320.5 71.2V79.7M321.5 71.2V79.7M322.5 71.2V79.7M323.5 71.2V79.7M324.5 71.2V79.7M325.5 71.2V79.7M326.5 71.2V79.7M327.5 71.2V82.5M328.5 71.2V79.7M329.5 71.2V79.7M330.5 71.2V82.5M331.5 71.2V79.7M332.5 71.2V79.7M333.5 71.2V83.2M334.5 71.2V79.7M335.5 71.2V79.7M336.5 71.2V83.2M337.5 71.2V79.7M338.5 71.2V79.7M339.5 71.2V79.7M340.5 71.2V79.7M341.5 71.2V79.7M342.5 71.2V79.7M343.5 71.2V79.7M344.5 71.2V79.7M345.5 71.2V79.7M346.5 71.2V82.5M347.5 71.2V79.7M348.5 71.2V79.7M349.5 71.2V79.7M350.5 71.2V79.7M351.5 71.2V79.7M352.5 71.2V79.7M353.5 71.2V79.7M354.5 71.2V79.7M355.5 71.2V79.7M356.5 71.2V79.7M357.5 71.2V79.7M358.5 71.2V79.7M359.5 71.2V79.7M360.5 71.2V79.7M361.5 71.2V79.7M362.5 71.2V79.7M363.5 71.2V79.7M364.5 71.2V79.7M365.5 71.2V83.2M366.5 71.2V79.7M367.5 71.2V79.7M368.5 71.2V79.7M369.5 71.2V79.7M370.5 71.2V79.7M371.5 71.2V79.7M372.5 71.2V79.7M373.5 71.2V79.7M374.5 71.2V79.7M375.5 71.2V79.7M376.5 67.7V79.7M377.5 71.2V79.7M378.5 71.2V79.7M379.5 71.2V79.7M380.5 72.7V79.7M381.5 71.2V79.7M382.5 71.2V79.7M383.5 71.2V79.7M384.5 71.2V79.7M385.5 71.2V83.2M386.5 71.2V79.7M387.5 71.2V79.7M388.5 71.2V82.5M389.5 71.2V79.7M390.5 71.2V82.5M391.5 71.2V79.7M392.5 71.2V79.7M393.5 67.0V79.7M394.5 71.2V79.7M395.5 71.2V79.7M396.5 71.2V79.7M397.5 71.2V79.7M398.5 71.2V79.7M399.5 71.2V79.7M400.5 71.2V79.7M401.5 71.2V79.7M402.5 71.2V83.2M403.5 71.2V79.7M404.5 71.2V79.7M405.5 71.2V79.7M406.5 71.2V83.2M407.5 71.2V79.7M408.5 71.2V79.7M409.5 71.2V79.7M410.5 71.2V79.7M411.5 71.2V79.7M412.5 71.2V79.7M413.5 71.2V79.7M414.5 67.7V79.7M415.5 71.2V79.7M416.5 71.2V79.7M417.5 71.2V79.7M418.5 71.2V83.2M419.5 71.2V79.7M420.5 71.2V79.7M421.5 71.2V79.7M422.5 75.2V79.7M423.5 71.2V79.7M424.5 71.2V79.7M425.5 71.2V79.7M426.5 71.2V82.5M427.5 71.2V79.7M428.5 71.2V79.7M429.5 71.2V79.7M430.5 71.2V79.7M431.5 71.2V79.7M432.5 71.2V83.2M433.5 75.2V79.7M434.5 71.2V79.7M435.5 71.2V79.7M436.5 71.2V79.7M437.5 71.2V79.7M438.5 71.2V79.7M439.5 71.2V79.7M440.5 71.2V79.7M441.5 71.2V79.7M442.5 71.2V79.7M443.5 71.2V79.7M444.5 71.2V79.7M445.5 67.0V79.7M446.5 71.2V79.7M447.5 71.2V79.7M448.5 71.2V79.7M449.5 71.2V79.7M450.5 71.2V79.7M451.5 71.2V79.7M452.5 71.2V83.2M453.5 71.2V79.7M454.5 71.2V79.7M455.5 71.2V79.7M456.5 71.2V79.7M457.5 71.2V79.7M458.5 72.7V79.7M459.5 71.2V79.7M460.5 71.2V79.7M461.5 71.2V82.5M462.5 71.2V79.7M463.5 71.2V79.7M464.5 71.2V79.7M465.5 71.2V79.7M466.5 71.2V83.2M467.5 71.2V79.7M468.5 71.2V79.7M469.5 71.2V83.2M470.5 71.2V79.7M471.5 71.2V79.7M472.5 71.2V79.7M473.5 71.2V79.7M474.5 72.7V79.7M475.5 71.2V79.7M476.5 71.2V79.7M477.5 71.2V79.7M478.5 75.2V79.7M479.5 71.2V79.7M480.5 71.2V79.7M481.5 71.2V79.7M482.5 71.2V79.7M483.5 75.2V83.2M484.5 71.2V83.2M485.5 71.2V83.2M486.5 71.2V79.7M487.5 71.0V79.7M488.5 71.2V79.7M489.5 71.2V83.2M490.5 67.7V79.7M491.5 71.2V82.5M492.5 71.2V79.7M493.5 71.2V79.7M494.5 71.2V79.7M495.5 71.2V82.5M496.5 71.2V79.7M497.5 71.2V79.7M498.5 71.2V79.7M499.5 71.2V79.7M500.5 71.2V83.2M501.5 71.2V79.7M502.5 71.2V79.7M503.5 71.2V79.7M504.5 71.2V79.7M505.5 71.2V79.7M506.5 71.2V83.2M507.5 71.2V79.7M508.5 71.2V79.7M509.5 71.2V79.7M510.5 71.2V79.7M511.5 71.2V79.7M512.5 71.2V79.7M513.5 71.2V82.5M514.5 71.2V79.7M515.5 71.2V79.7M516.5 71.2V79.7M517.5 71.2V79.7M518.5 71.2V79.7M519.5 71.2V79.7M520.5 71.2V79.7M521.5 71.2V79.7M522.5 71.2V79.7M523.5 71.2V79.7M524.5 71.2V82.5M525.5 67.7V79.7M526.5 71.2V79.7M527.5 71.2V79.7M528.5 71.2V79.7M529.5 71.2V79.7M530.5 71.2V79.7M531.5 71.2V79.7M532.5 71.2V79.7M533.5 71.2V79.7M534.5 71.2V79.7M535.5 71.2V79.7M536.5 71.2V79.7M537.5 71.2V79.7M538.5 71.2V79.7M539.5 71.2V79.7M540.5 71.2V79.7M541.5 71.2V79.7M542.5 71.2V79.7M543.5 71.2V83.2M544.5 71.2V79.7M545.5 71.2V79.7M546.5 67.0V79.7M547.5 71.2V79.7M548.5 71.2V79.7M549.5 71.2V79.7M550.5 71.2V79.7M551.5 71.2V79.7M552.5 71.2V79.7M553.5 71.2V82.5M554.5 71.2V79.7M555.5 71.2V79.7M556.5 71.2V79.7M557.5 71.2V79.7M558.5 71.2V82.5M559.5 71.2V79.7M560.5 71.2V79.7M561.5 71.2V79.7M562.5 71.2V79.7M563.5 71.2V79.7M564.5 71.2V79.7M565.5 71.2V79.7M566.5 71.2V79.7M567.5 71.2V79.7M568.5 71.2V79.7M569.5 71.2V79.7M570.5 71.2V79.7M571.5 71.2V79.7M572.5 71.2V79.7M573.5 71.2V79.7M574.5 71.2V79.7M575.5 71.2V82.5M576.5 71.2V79.7M577.5 71.2V83.2M578.5 71.2V79.7M579.5 71.2V79.7M580.5 71.2V79.7M581.5 71.2V83.2M582.5 71.2V79.7M583.5 71.2V79.7M584.5 71.2V79.7M585.5 71.2V79.7M586.5 71.2V79.7M587.5 71.2V79.7M588.5 71.2V79.7M589.5 71.2V79.7M590.5 71.2V79.7M591.5 71.2V79.7M592.5 71.2V79.7M593.5 71.2V79.7M594.5 71.2V82.5M595.5 71.2V79.7M596.5 71.2V79.7M597.5 71.2V79.7M598.5 71.2V79.7M599.5 71.2V79.7M600.5 71.2V79.7M601.5 71.2V79.7M602.5 71.2V82.5M603.5 71.2V79.7M604.5 71.2V79.7M605.5 71.2V82.5M606.5 71.2V79.7M607.5 71.2V79.7M608.5 71.2V79.7M609.5 71.2V79.7M610.5 71.2V79.7M611.5 71.2V79.7" stroke="#ffff00" stroke-width="1" fill="none"/>
<rect x="292" y="316" width="342" height="23" fill="#c8c8c8" />
<rect x="292" y="316" width="13" height="23" fill="url(#gL)" />
<rect x="292" y="316" width="342" height="1" fill="#d8d8d8" />
<rect x="622" y="316" width="12" height="23" fill="url(#gRL)" />
<rect x="295" y="338" width="339" height="1" fill="#8a8a8a" />
<text x="308.5" y="331" font-size="12" text-anchor="start" font-weight="normal" fill="#000" stroke="#000" stroke-width="0.25" textLength="52" lengthAdjust="spacingAndGlyphs" >Gscint_US</text>
<text x="414.5" y="331" font-size="12" text-anchor="start" font-weight="normal" fill="#000" stroke="#000" stroke-width="0.25" textLength="58.5" lengthAdjust="spacingAndGlyphs" >DS cherenk</text>
<text x="521" y="331" font-size="12" text-anchor="start" font-weight="normal" fill="#000" stroke="#000" stroke-width="0.25" textLength="47" lengthAdjust="spacingAndGlyphs" >Drift scint</text>
<rect x="383" y="318" width="25" height="19" fill="#000" />
<rect x="383.5" y="318.5" width="24" height="18" fill="none" stroke="#208020"/>
<polyline points="385,332 395.2,321.5 406,332" fill="none" stroke="#ffff00" stroke-width="1.2"/>
<rect x="489.5" y="318" width="25" height="19" fill="#000" />
<rect x="490.0" y="318.5" width="24" height="18" fill="none" stroke="#208020"/>
<polyline points="491,332 499,321.5 507.3,331.3 512.5,326" fill="none" stroke="#ff4040" stroke-width="1.2"/>
<rect x="595" y="318" width="25" height="19" fill="#000" />
<rect x="595.5" y="318.5" width="24" height="18" fill="none" stroke="#208020"/>
<polyline points="597,332.4 606,321.2 613.6,331.6 619,324.6" fill="none" stroke="#20ff20" stroke-width="1.2"/>
<text x="25.5" y="366" font-size="12" text-anchor="start" font-weight="normal" fill="#000" stroke="#000" stroke-width="0.25" textLength="170" lengthAdjust="spacingAndGlyphs" >Offset and scale for display only.</text>
<text x="25.5" y="381" font-size="12" text-anchor="start" font-weight="normal" fill="#000" stroke="#000" stroke-width="0.25" textLength="139" lengthAdjust="spacingAndGlyphs" >True voltages saved to .csv</text>
<text x="297.4" y="355" font-size="12" text-anchor="end" font-weight="bold" fill="#000" textLength="41.5" lengthAdjust="spacingAndGlyphs" >Offsets</text>
<text x="297.8" y="386.7" font-size="12" text-anchor="end" font-weight="bold" fill="#000" textLength="30" lengthAdjust="spacingAndGlyphs" >Scale</text>
<polygon points="300,342 630,342 630,402 300,402" fill="#b9b9b9"/>
<polygon points="300,342 630,342 626,346 304,346" fill="#b9b9b9"/>
<polygon points="300,342 304,346 304,398 300,402" fill="#a2a2a2"/>
<rect x="300" y="342" width="1" height="60" fill="#8e8e8e"/>
<rect x="300" y="342" width="330" height="1" fill="#a0a0a0"/>
<rect x="304" y="346" width="108.0" height="25.19999999999999" fill="#bdbdbd"/>
<polygon points="304,346 412.0,346 408.5,350 308,350 308,367.4 304,371.2" fill="#939393"/>
<rect x="304" y="346" width="108.0" height="1" fill="#858585"/>
<rect x="304" y="346" width="1" height="25.19999999999999" fill="#858585"/>
<rect x="308" y="350" width="100.5" height="17.399999999999977" fill="#fbfbfb" />
<text x="310.3" y="362.9" font-size="12" text-anchor="start" font-weight="normal" fill="#000" stroke="#000" stroke-width="0.25" >0.01</text>
<rect x="410.6" y="346" width="108.0" height="25.19999999999999" fill="#bdbdbd"/>
<polygon points="410.6,346 518.6,346 515.1,350 414.6,350 414.6,367.4 410.6,371.2" fill="#939393"/>
<rect x="410.6" y="346" width="108.0" height="1" fill="#858585"/>
<rect x="410.6" y="346" width="1" height="25.19999999999999" fill="#858585"/>
<rect x="414.6" y="350" width="100.5" height="17.399999999999977" fill="#fbfbfb" />
<text x="416.90000000000003" y="362.9" font-size="12" text-anchor="start" font-weight="normal" fill="#000" stroke="#000" stroke-width="0.25" >0.001</text>
<rect x="517.2" y="346" width="108.29999999999995" height="25.19999999999999" fill="#bdbdbd"/>
<polygon points="517.2,346 625.5,346 622,350 521.2,350 521.2,367.4 517.2,371.2" fill="#939393"/>
<rect x="517.2" y="346" width="108.29999999999995" height="1" fill="#858585"/>
<rect x="517.2" y="346" width="1" height="25.19999999999999" fill="#858585"/>
<rect x="521.2" y="350" width="100.79999999999995" height="17.399999999999977" fill="#fbfbfb" />
<text x="523.5" y="362.9" font-size="12" text-anchor="start" font-weight="normal" fill="#000" stroke="#000" stroke-width="0.25" >-0.001</text>
<rect x="304.6" y="371.8" width="108.0" height="25.80000000000001" fill="#bdbdbd"/>
<polygon points="304.6,371.8 412.6,371.8 409.1,375.8 308.6,375.8 308.6,393.8 304.6,397.6" fill="#939393"/>
<rect x="304.6" y="371.8" width="108.0" height="1" fill="#858585"/>
<rect x="304.6" y="371.8" width="1" height="25.80000000000001" fill="#858585"/>
<rect x="308.6" y="375.8" width="100.5" height="18.0" fill="#fbfbfb" />
<text x="310.90000000000003" y="388.7" font-size="12" text-anchor="start" font-weight="normal" fill="#000" stroke="#000" stroke-width="0.25" >0.1</text>
<rect x="411.20000000000005" y="371.8" width="108.0" height="25.80000000000001" fill="#bdbdbd"/>
<polygon points="411.20000000000005,371.8 519.2,371.8 515.7,375.8 415.20000000000005,375.8 415.20000000000005,393.8 411.20000000000005,397.6" fill="#939393"/>
<rect x="411.20000000000005" y="371.8" width="108.0" height="1" fill="#858585"/>
<rect x="411.20000000000005" y="371.8" width="1" height="25.80000000000001" fill="#858585"/>
<rect x="415.20000000000005" y="375.8" width="100.5" height="18.0" fill="#fbfbfb" />
<text x="417.50000000000006" y="388.7" font-size="12" text-anchor="start" font-weight="normal" fill="#000" stroke="#000" stroke-width="0.25" >1</text>
<rect x="517.8000000000001" y="371.8" width="107.69999999999993" height="25.80000000000001" fill="#bdbdbd"/>
<polygon points="517.8000000000001,371.8 625.5,371.8 622,375.8 521.8000000000001,375.8 521.8000000000001,393.8 517.8000000000001,397.6" fill="#939393"/>
<rect x="517.8000000000001" y="371.8" width="107.69999999999993" height="1" fill="#858585"/>
<rect x="517.8000000000001" y="371.8" width="1" height="25.80000000000001" fill="#858585"/>
<rect x="521.8000000000001" y="375.8" width="100.19999999999993" height="18.0" fill="#fbfbfb" />
<text x="524.1" y="388.7" font-size="12" text-anchor="start" font-weight="normal" fill="#000" stroke="#000" stroke-width="0.25" >0.1</text>
<rect x="643" y="24" width="396" height="360" fill="#c3c3c3" />
<rect x="643" y="24" width="13" height="360" fill="url(#gL)" />
<rect x="643" y="24" width="396" height="2" fill="#d4d4d4" />
<rect x="1022" y="24" width="17" height="360" fill="url(#gRL)" />
<rect x="643" y="382" width="396" height="2" fill="#8a8a8a" />
<rect x="643" y="384" width="396" height="41" fill="#000" />
<rect x="683" y="0" width="356" height="23" fill="#c5c5c5" />
<rect x="683" y="0" width="12" height="23" fill="url(#gL)" />
<rect x="1026" y="0" width="13" height="23" fill="url(#gRL)" />
<rect x="686" y="22" width="353" height="1" fill="#8a8a8a" />
<text x="723" y="15" font-size="12" text-anchor="start" font-weight="normal" fill="#000" stroke="#000" stroke-width="0.25" textLength="12.7" lengthAdjust="spacingAndGlyphs" >TD</text>
<text x="794" y="15" font-size="12" text-anchor="start" font-weight="normal" fill="#000" stroke="#000" stroke-width="0.25" textLength="25.4" lengthAdjust="spacingAndGlyphs" >AMT</text>
<text x="865.6" y="15" font-size="12" text-anchor="start" font-weight="normal" fill="#000" stroke="#000" stroke-width="0.25" textLength="35.8" lengthAdjust="spacingAndGlyphs" >Brescia</text>
<text x="961.5" y="15" font-size="12" text-anchor="start" font-weight="normal" fill="#000" stroke="#000" stroke-width="0.25" textLength="23" lengthAdjust="spacingAndGlyphs" >BGO</text>
<rect x="747.5" y="2.5" width="27.5" height="17.5" fill="#000" />
<rect x="747.5" y="2.5" width="27.5" height="17.5" fill="none" stroke="#e8e8e8" stroke-width="0.8"/>
<polyline points="749.5,15 761.5,5 773.5,15" fill="none" stroke="#ffffff" stroke-width="3"/>
<rect x="830.5" y="2.5" width="27.5" height="17.5" fill="#000" />
<rect x="830.5" y="2.5" width="27.5" height="17.5" fill="none" stroke="#e8e8e8" stroke-width="0.8"/>
<polyline points="832.5,15 844.5,5 856.5,15" fill="none" stroke="#ff4848" stroke-width="2.2"/>
<rect x="913.5" y="2.5" width="27.5" height="17.5" fill="#000" />
<rect x="913.5" y="2.5" width="27.5" height="17.5" fill="none" stroke="#e8e8e8" stroke-width="0.8"/>
<polyline points="915.5,15 927.5,5 939.5,15" fill="none" stroke="#20ff20" stroke-width="2.2"/>
<rect x="996.5" y="2.5" width="27.5" height="17.5" fill="#000" />
<rect x="996.5" y="2.5" width="27.5" height="17.5" fill="none" stroke="#e8e8e8" stroke-width="0.8"/>
<polyline points="998.5,15 1010.5,5 1022.5,15" fill="none" stroke="#3c9cff" stroke-width="3"/>
<rect x="726" y="32" width="290" height="311" fill="#d2d2d2" />
<rect x="727" y="33" width="288" height="309" fill="#000" />
<line x1="735.5" y1="34" x2="735.5" y2="341" stroke="#004000"/>
<line x1="742.5" y1="34" x2="742.5" y2="341" stroke="#004000"/>
<line x1="749.5" y1="34" x2="749.5" y2="341" stroke="#004000"/>
<line x1="757.5" y1="34" x2="757.5" y2="341" stroke="#004000"/>
<line x1="764.5" y1="34" x2="764.5" y2="341" stroke="#008000"/>
<line x1="771.5" y1="34" x2="771.5" y2="341" stroke="#004000"/>
<line x1="778.5" y1="34" x2="778.5" y2="341" stroke="#004000"/>
<line x1="785.5" y1="34" x2="785.5" y2="341" stroke="#004000"/>
<line x1="792.5" y1="34" x2="792.5" y2="341" stroke="#004000"/>
<line x1="800.5" y1="34" x2="800.5" y2="341" stroke="#008000"/>
<line x1="807.5" y1="34" x2="807.5" y2="341" stroke="#004000"/>
<line x1="814.5" y1="34" x2="814.5" y2="341" stroke="#004000"/>
<line x1="821.5" y1="34" x2="821.5" y2="341" stroke="#004000"/>
<line x1="828.5" y1="34" x2="828.5" y2="341" stroke="#004000"/>
<line x1="835.5" y1="34" x2="835.5" y2="341" stroke="#008000"/>
<line x1="842.5" y1="34" x2="842.5" y2="341" stroke="#004000"/>
<line x1="850.5" y1="34" x2="850.5" y2="341" stroke="#004000"/>
<line x1="857.5" y1="34" x2="857.5" y2="341" stroke="#004000"/>
<line x1="864.5" y1="34" x2="864.5" y2="341" stroke="#004000"/>
<line x1="871.5" y1="34" x2="871.5" y2="341" stroke="#008000"/>
<line x1="878.5" y1="34" x2="878.5" y2="341" stroke="#004000"/>
<line x1="885.5" y1="34" x2="885.5" y2="341" stroke="#004000"/>
<line x1="892.5" y1="34" x2="892.5" y2="341" stroke="#004000"/>
<line x1="900.5" y1="34" x2="900.5" y2="341" stroke="#004000"/>
<line x1="907.5" y1="34" x2="907.5" y2="341" stroke="#008000"/>
<line x1="914.5" y1="34" x2="914.5" y2="341" stroke="#004000"/>
<line x1="921.5" y1="34" x2="921.5" y2="341" stroke="#004000"/>
<line x1="928.5" y1="34" x2="928.5" y2="341" stroke="#004000"/>
<line x1="935.5" y1="34" x2="935.5" y2="341" stroke="#004000"/>
<line x1="942.5" y1="34" x2="942.5" y2="341" stroke="#008000"/>
<line x1="950.5" y1="34" x2="950.5" y2="341" stroke="#004000"/>
<line x1="957.5" y1="34" x2="957.5" y2="341" stroke="#004000"/>
<line x1="964.5" y1="34" x2="964.5" y2="341" stroke="#004000"/>
<line x1="971.5" y1="34" x2="971.5" y2="341" stroke="#004000"/>
<line x1="978.5" y1="34" x2="978.5" y2="341" stroke="#008000"/>
<line x1="985.5" y1="34" x2="985.5" y2="341" stroke="#004000"/>
<line x1="993.5" y1="34" x2="993.5" y2="341" stroke="#004000"/>
<line x1="1000.5" y1="34" x2="1000.5" y2="341" stroke="#004000"/>
<line x1="1007.5" y1="34" x2="1007.5" y2="341" stroke="#004000"/>
<line x1="728" y1="332.5" x2="1014" y2="332.5" stroke="#004000"/>
<line x1="728" y1="324.5" x2="1014" y2="324.5" stroke="#004000"/>
<line x1="728" y1="315.5" x2="1014" y2="315.5" stroke="#004000"/>
<line x1="728" y1="307.5" x2="1014" y2="307.5" stroke="#008000"/>
<line x1="728" y1="298.5" x2="1014" y2="298.5" stroke="#004000"/>
<line x1="728" y1="290.5" x2="1014" y2="290.5" stroke="#004000"/>
<line x1="728" y1="281.5" x2="1014" y2="281.5" stroke="#004000"/>
<line x1="728" y1="273.5" x2="1014" y2="273.5" stroke="#008000"/>
<line x1="728" y1="264.5" x2="1014" y2="264.5" stroke="#004000"/>
<line x1="728" y1="256.5" x2="1014" y2="256.5" stroke="#004000"/>
<line x1="728" y1="247.5" x2="1014" y2="247.5" stroke="#004000"/>
<line x1="728" y1="239.5" x2="1014" y2="239.5" stroke="#008000"/>
<line x1="728" y1="230.5" x2="1014" y2="230.5" stroke="#004000"/>
<line x1="728" y1="222.5" x2="1014" y2="222.5" stroke="#004000"/>
<line x1="728" y1="213.5" x2="1014" y2="213.5" stroke="#004000"/>
<line x1="728" y1="205.5" x2="1014" y2="205.5" stroke="#008000"/>
<line x1="728" y1="196.5" x2="1014" y2="196.5" stroke="#004000"/>
<line x1="728" y1="187.5" x2="1014" y2="187.5" stroke="#004000"/>
<line x1="728" y1="179.5" x2="1014" y2="179.5" stroke="#004000"/>
<line x1="728" y1="170.5" x2="1014" y2="170.5" stroke="#008000"/>
<line x1="728" y1="162.5" x2="1014" y2="162.5" stroke="#004000"/>
<line x1="728" y1="153.5" x2="1014" y2="153.5" stroke="#004000"/>
<line x1="728" y1="145.5" x2="1014" y2="145.5" stroke="#004000"/>
<line x1="728" y1="136.5" x2="1014" y2="136.5" stroke="#008000"/>
<line x1="728" y1="128.5" x2="1014" y2="128.5" stroke="#004000"/>
<line x1="728" y1="119.5" x2="1014" y2="119.5" stroke="#004000"/>
<line x1="728" y1="111.5" x2="1014" y2="111.5" stroke="#004000"/>
<line x1="728" y1="102.5" x2="1014" y2="102.5" stroke="#008000"/>
<line x1="728" y1="94.5" x2="1014" y2="94.5" stroke="#004000"/>
<line x1="728" y1="85.5" x2="1014" y2="85.5" stroke="#004000"/>
<line x1="728" y1="77.5" x2="1014" y2="77.5" stroke="#004000"/>
<line x1="728" y1="68.5" x2="1014" y2="68.5" stroke="#008000"/>
<line x1="728" y1="60.5" x2="1014" y2="60.5" stroke="#004000"/>
<line x1="728" y1="51.5" x2="1014" y2="51.5" stroke="#004000"/>
<line x1="728" y1="43.5" x2="1014" y2="43.5" stroke="#004000"/>
<line x1="721" y1="341.5" x2="726" y2="341.5" stroke="#000"/>
<text x="719" y="346.0" font-size="12" text-anchor="end" font-weight="normal" fill="#000" stroke="#000" stroke-width="0.25" textLength="5.84" lengthAdjust="spacingAndGlyphs" >0</text>
<line x1="721" y1="307.5" x2="726" y2="307.5" stroke="#000"/>
<text x="719" y="312.0" font-size="12" text-anchor="end" font-weight="normal" fill="#000" stroke="#000" stroke-width="0.25" textLength="23.34" lengthAdjust="spacingAndGlyphs" >2000</text>
<line x1="721" y1="273.5" x2="726" y2="273.5" stroke="#000"/>
<text x="719" y="278.0" font-size="12" text-anchor="end" font-weight="normal" fill="#000" stroke="#000" stroke-width="0.25" textLength="23.34" lengthAdjust="spacingAndGlyphs" >4000</text>
<line x1="721" y1="239.5" x2="726" y2="239.5" stroke="#000"/>
<text x="719" y="244.0" font-size="12" text-anchor="end" font-weight="normal" fill="#000" stroke="#000" stroke-width="0.25" textLength="23.34" lengthAdjust="spacingAndGlyphs" >6000</text>
<line x1="721" y1="205.5" x2="726" y2="205.5" stroke="#000"/>
<text x="719" y="210.0" font-size="12" text-anchor="end" font-weight="normal" fill="#000" stroke="#000" stroke-width="0.25" textLength="23.34" lengthAdjust="spacingAndGlyphs" >8000</text>
<line x1="721" y1="170.5" x2="726" y2="170.5" stroke="#000"/>
<text x="719" y="175.0" font-size="12" text-anchor="end" font-weight="normal" fill="#000" stroke="#000" stroke-width="0.25" textLength="29.18" lengthAdjust="spacingAndGlyphs" >10000</text>
<line x1="721" y1="136.5" x2="726" y2="136.5" stroke="#000"/>
<text x="719" y="141.0" font-size="12" text-anchor="end" font-weight="normal" fill="#000" stroke="#000" stroke-width="0.25" textLength="29.18" lengthAdjust="spacingAndGlyphs" >12000</text>
<line x1="721" y1="102.5" x2="726" y2="102.5" stroke="#000"/>
<text x="719" y="107.0" font-size="12" text-anchor="end" font-weight="normal" fill="#000" stroke="#000" stroke-width="0.25" textLength="29.18" lengthAdjust="spacingAndGlyphs" >14000</text>
<line x1="721" y1="68.5" x2="726" y2="68.5" stroke="#000"/>
<text x="719" y="73.0" font-size="12" text-anchor="end" font-weight="normal" fill="#000" stroke="#000" stroke-width="0.25" textLength="29.18" lengthAdjust="spacingAndGlyphs" >16000</text>
<line x1="721" y1="34.5" x2="726" y2="34.5" stroke="#000"/>
<text x="719" y="39.0" font-size="12" text-anchor="end" font-weight="normal" fill="#000" stroke="#000" stroke-width="0.25" textLength="29.18" lengthAdjust="spacingAndGlyphs" >18000</text>
<line x1="728.5" y1="344" x2="728.5" y2="349" stroke="#000"/>
<text x="728.5" y="361" font-size="12" text-anchor="middle" font-weight="normal" fill="#000" stroke="#000" stroke-width="0.25" textLength="6.14" lengthAdjust="spacingAndGlyphs" >0</text>
<line x1="764.5" y1="344" x2="764.5" y2="349" stroke="#000"/>
<text x="764.5" y="361" font-size="12" text-anchor="middle" font-weight="normal" fill="#000" stroke="#000" stroke-width="0.25" textLength="12.27" lengthAdjust="spacingAndGlyphs" >10</text>
<line x1="800.5" y1="344" x2="800.5" y2="349" stroke="#000"/>
<text x="800.5" y="361" font-size="12" text-anchor="middle" font-weight="normal" fill="#000" stroke="#000" stroke-width="0.25" textLength="12.27" lengthAdjust="spacingAndGlyphs" >20</text>
<line x1="835.5" y1="344" x2="835.5" y2="349" stroke="#000"/>
<text x="835.5" y="361" font-size="12" text-anchor="middle" font-weight="normal" fill="#000" stroke="#000" stroke-width="0.25" textLength="12.27" lengthAdjust="spacingAndGlyphs" >30</text>
<line x1="871.5" y1="344" x2="871.5" y2="349" stroke="#000"/>
<text x="871.5" y="361" font-size="12" text-anchor="middle" font-weight="normal" fill="#000" stroke="#000" stroke-width="0.25" textLength="12.27" lengthAdjust="spacingAndGlyphs" >40</text>
<line x1="907.5" y1="344" x2="907.5" y2="349" stroke="#000"/>
<text x="907.5" y="361" font-size="12" text-anchor="middle" font-weight="normal" fill="#000" stroke="#000" stroke-width="0.25" textLength="12.27" lengthAdjust="spacingAndGlyphs" >50</text>
<line x1="942.5" y1="344" x2="942.5" y2="349" stroke="#000"/>
<text x="942.5" y="361" font-size="12" text-anchor="middle" font-weight="normal" fill="#000" stroke="#000" stroke-width="0.25" textLength="12.27" lengthAdjust="spacingAndGlyphs" >60</text>
<line x1="978.5" y1="344" x2="978.5" y2="349" stroke="#000"/>
<text x="978.5" y="361" font-size="12" text-anchor="middle" font-weight="normal" fill="#000" stroke="#000" stroke-width="0.25" textLength="12.27" lengthAdjust="spacingAndGlyphs" >70</text>
<line x1="1014.5" y1="344" x2="1014.5" y2="349" stroke="#000"/>
<text x="1014.5" y="361" font-size="12" text-anchor="middle" font-weight="normal" fill="#000" stroke="#000" stroke-width="0.25" textLength="12.27" lengthAdjust="spacingAndGlyphs" >80</text>
<text x="932" y="378" font-size="12" text-anchor="middle" font-weight="normal" fill="#000" stroke="#000" stroke-width="0.25" textLength="40.6" lengthAdjust="spacingAndGlyphs" >Time (s)</text>
<text x="0" y="0" font-size="12" text-anchor="middle" fill="#000" stroke="#000" stroke-width="0.25" transform="translate(683,187.5) rotate(-90)" textLength="56.5" lengthAdjust="spacingAndGlyphs">Amplitude</text>
<rect x="728" y="341" width="12" height="1" fill="#3c9cff" />
<rect x="886" y="341" width="128" height="1" fill="#3c9cff" />
<rect x="740" y="340" width="146" height="2" fill="#ff4848" />
<rect x="886" y="339" width="128" height="2" fill="#ff4848" />
<rect x="740" y="338" width="60" height="2" fill="#20ff20" />
<rect x="800" y="337" width="76" height="2" fill="#20ff20" />
<rect x="876" y="336" width="83" height="2" fill="#20ff20" />
<rect x="959" y="335" width="51" height="2" fill="#20ff20" />
<rect x="1010" y="334" width="4" height="2" fill="#20ff20" />
<path d="M728 341H739V312.7L739.6 310.9L741.6 306.6L744.6 304.5L748 303.6H757V302.5H771V301.5H790V300.5H802V299.5H820V298.5H844V297.5H860V296.5H869V295.5H877V294.5H884V293.5H901V292.5H920V291.5H938V290.5H963V289.5H993V283H994V120H995V51H1013" fill="none" stroke="#fff" stroke-width="2" stroke-linejoin="miter"/></svg></body></html>
